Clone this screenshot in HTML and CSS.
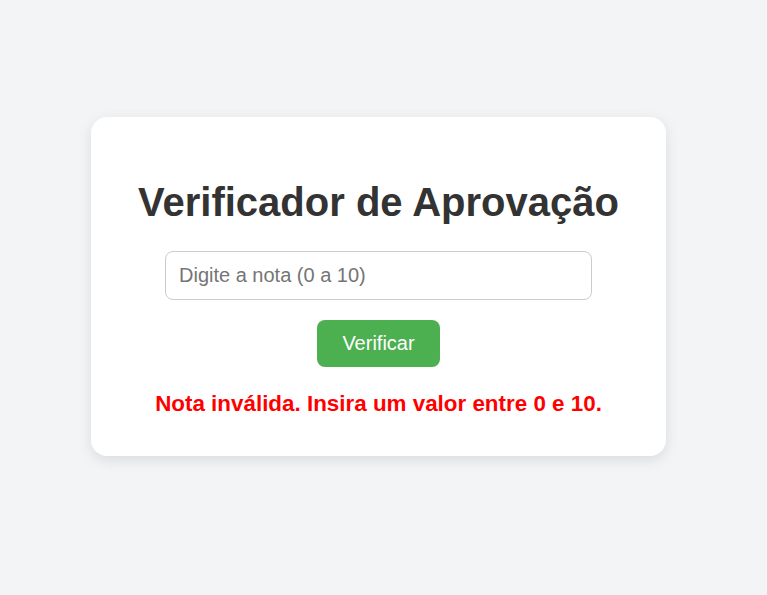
FILE: index.html
```html
<!DOCTYPE html>
<html lang="pt-BR">
<head>
<meta charset="UTF-8">
<title>Verificador de Aprovação</title>
<link rel="stylesheet" href="styles.css">
</head>
<body>
  <main class="card">
    <h1 class="title">Verificador de Aprovação</h1>
    <input class="grade-input" type="text" placeholder="Digite a nota (0 a 10)">
    <button class="check-btn" type="button">Verificar</button>
    <p class="message">Nota inválida. Insira um valor entre 0 e 10.</p>
  </main>
</body>
</html>
```

FILE: styles.css
```css
html, body {
  margin: 0;
  padding: 0;
}

body {
  background: #f3f4f6;
  font-family: "Liberation Sans", Arial, sans-serif;
  min-height: 595px;
  display: flex;
  justify-content: center;
  align-items: flex-start;
}

.card {
  box-sizing: border-box;
  width: 575px;
  margin-top: 117px;
  margin-right: 10px;
  background: #ffffff;
  border-radius: 16px;
  box-shadow: 0 4px 14px rgba(0, 0, 0, 0.1);
  padding: 62px 20px 39px;
  display: flex;
  flex-direction: column;
  align-items: center;
}

.title {
  margin: 0;
  font-size: 40px;
  font-weight: bold;
  color: #333333;
  line-height: 46px;
}

.grade-input {
  box-sizing: border-box;
  margin-top: 26px;
  width: 427px;
  height: 49px;
  padding: 12px 13px;
  font-family: "Liberation Sans", Arial, sans-serif;
  font-size: 20px;
  border: 1px solid #cccccc;
  border-radius: 8px;
  color: #333333;
  outline: none;
}

.grade-input::placeholder {
  color: #757575;
}

.check-btn {
  margin-top: 20px;
  height: 47px;
  padding: 0 25px;
  background: #4caf50;
  color: #ffffff;
  border: none;
  border-radius: 8px;
  font-family: "Liberation Sans", Arial, sans-serif;
  font-size: 20px;
  cursor: pointer;
}

.message {
  margin: 24px 0 0;
  font-size: 22.4px;
  line-height: 26px;
  font-weight: bold;
  color: #ff0000;
}
```
